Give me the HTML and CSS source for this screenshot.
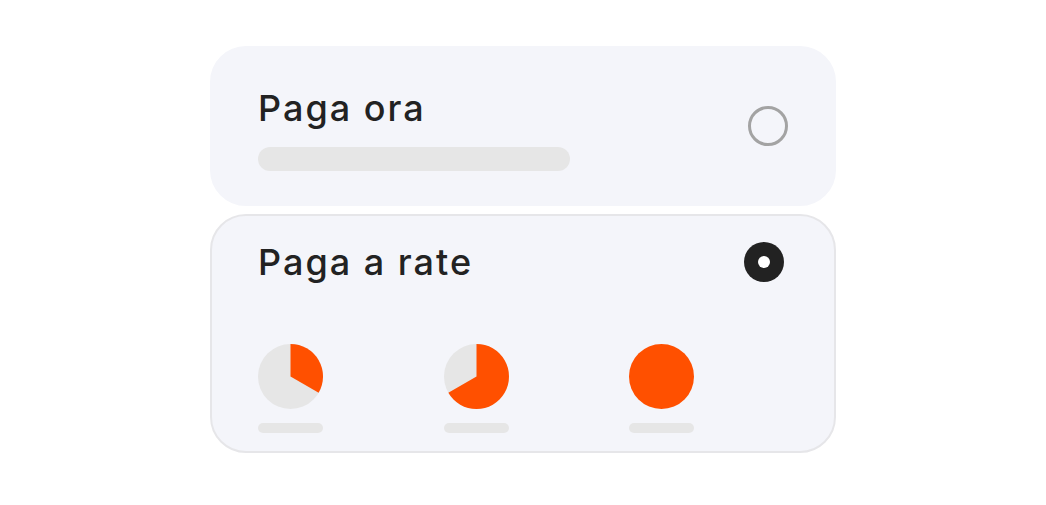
FILE: index.html
```html
<!DOCTYPE html>
<html lang="it">
<head>
<meta charset="utf-8">
<link rel="stylesheet" href="styles.css">
</head>
<body>
<div class="stack">
  <div class="card first">
    <div class="info">
      <div class="title">Paga ora</div>
      <div class="bar-wide"></div>
    </div>
    <span class="radio"></span>
  </div>
  <div class="card selected">
    <div class="row">
      <div class="title">Paga a rate</div>
      <span class="radio on"></span>
    </div>
    <div class="plans">
      <div class="plan">
        <svg class="pie" viewBox="0 0 65 65" width="65" height="65">
          <circle cx="32.5" cy="32.5" r="32.5" fill="#e6e6e6"/>
          <path d="M32.5 32.5 L32.5 0 A32.5 32.5 0 0 1 60.65 48.75 Z" fill="#ff5000"/>
        </svg>
        <div class="bar-small"></div>
      </div>
      <div class="plan">
        <svg class="pie" viewBox="0 0 65 65" width="65" height="65">
          <circle cx="32.5" cy="32.5" r="32.5" fill="#e6e6e6"/>
          <path d="M32.5 32.5 L32.5 0 A32.5 32.5 0 1 1 4.35 48.75 Z" fill="#ff5000"/>
        </svg>
        <div class="bar-small"></div>
      </div>
      <div class="plan">
        <svg class="pie" viewBox="0 0 65 65" width="65" height="65">
          <circle cx="32.5" cy="32.5" r="32.5" fill="#ff5000"/>
        </svg>
        <div class="bar-small"></div>
      </div>
    </div>
  </div>
</div>
</body>
</html>
```
FILE: styles.css
```css
html, body {
  margin: 0;
  padding: 0;
  background: #ffffff;
}
body {
  font-family: "Inter", "Noto Sans", sans-serif;
  color: #222222;
}
.stack {
  width: 626px;
  margin: 46px auto 0;
  display: flex;
  flex-direction: column;
  gap: 8px;
}
.card {
  box-sizing: border-box;
  background: #f4f5fa;
  border-radius: 36px;
  border: 2px solid #f4f5fa;
  padding: 0 46px;
}
.card.first {
  height: 160px;
  padding-top: 38px;
  display: flex;
  justify-content: space-between;
  align-items: flex-start;
}
.card.first .radio {
  margin-top: 20px;
}
.card.selected {
  height: 239px;
  border-color: #e6e6e9;
  padding-top: 24px;
}
.row {
  display: flex;
  align-items: center;
  justify-content: space-between;
  height: 44px;
}
.title {
  font-size: 36px;
  font-weight: 500;
  line-height: 44px;
  letter-spacing: 2px;
}
.radio {
  box-sizing: border-box;
  width: 40px;
  height: 40px;
  border-radius: 50%;
  border: 3px solid #a3a3a3;
  flex: none;
}
.radio.on {
  border: none;
  background: #222222;
  display: flex;
  align-items: center;
  justify-content: center;
  margin-right: 4px;
}
.radio.on::after {
  content: "";
  width: 12px;
  height: 12px;
  border-radius: 50%;
  background: #ffffff;
}
.bar-wide {
  margin-top: 17px;
  width: 312px;
  height: 24px;
  border-radius: 12px;
  background: #e6e6e6;
}
.plans {
  display: flex;
  gap: 120.5px;
  margin-top: 60px;
}
.plan {
  display: flex;
  flex-direction: column;
  gap: 14px;
  width: 65px;
}
.pie {
  display: block;
}
.bar-small {
  height: 10px;
  border-radius: 5px;
  background: #e6e6e6;
}
```
